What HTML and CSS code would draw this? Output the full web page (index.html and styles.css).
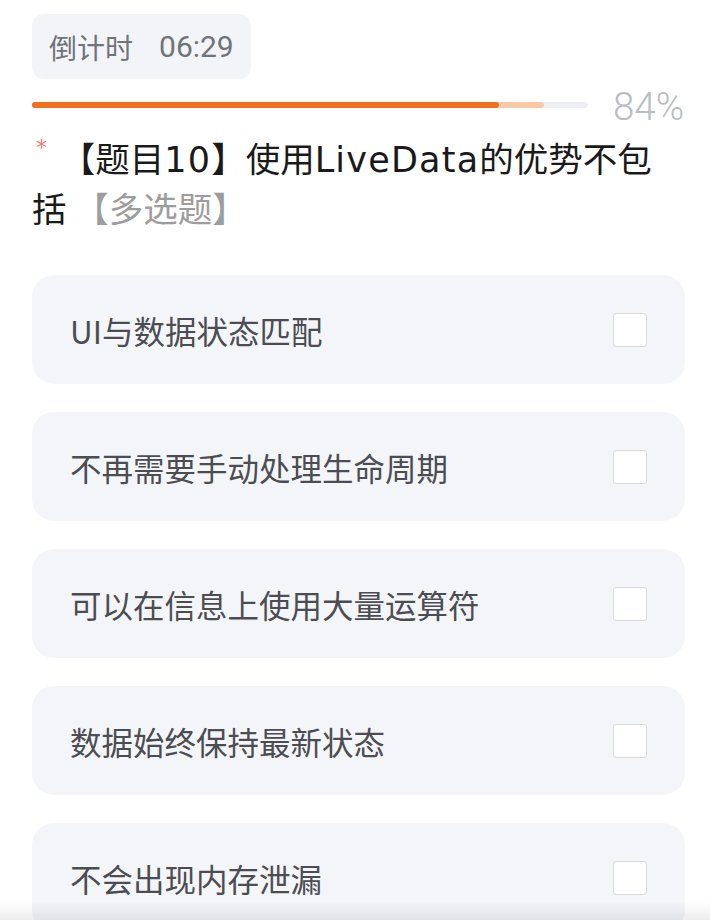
FILE: index.html
```html
<!DOCTYPE html>
<html lang="zh-CN">
<head>
<meta charset="utf-8">
<link rel="stylesheet" href="styles.css">
</head>
<body>
<div class="page">
  <div class="timer"><span class="timer-label">倒计时</span><span class="timer-value">06:29</span></div>
  <div class="progress-row">
    <div class="track">
      <div class="buffer" style="width:92%"></div>
      <div class="fill" style="width:84%"></div>
    </div>
    <div class="percent">84%</div>
  </div>
  <h1 class="question"><span class="star">*</span> 【题目<span class="latin">10</span>】使用<span class="latin">LiveData</span>的优势不包括 <span class="qtype">【多选题】</span></h1>
  <div class="options">
    <div class="option"><span class="opt-text">UI与数据状态匹配</span><span class="box"></span></div>
    <div class="option"><span class="opt-text">不再需要手动处理生命周期</span><span class="box"></span></div>
    <div class="option"><span class="opt-text">可以在信息上使用大量运算符</span><span class="box"></span></div>
    <div class="option"><span class="opt-text">数据始终保持最新状态</span><span class="box"></span></div>
    <div class="option"><span class="opt-text">不会出现内存泄漏</span><span class="box"></span></div>
  </div>
</div>
<div class="bottom-shade"></div>
</body>
</html>
```
FILE: styles.css
```css
html, body {
  margin: 0;
  padding: 0;
  background: #ffffff;
  overflow: hidden;
}
body {
  font-family: "Noto Sans CJK SC", "Noto Sans", sans-serif;
  width: 710px;
  height: 920px;
}
.page {
  padding: 14px 25px 0 32px;
}
.timer {
  display: inline-flex;
  align-items: center;
  box-sizing: border-box;
  width: 219px;
  height: 65px;
  padding-left: 17px;
  background: #f3f4f8;
  border-radius: 12px;
  color: #707378;
  font-size: 28px;
}
.timer-value {
  margin-left: 26px;
  font-family: Roboto, "Noto Sans", sans-serif;
  font-size: 30px;
}
.progress-row {
  display: flex;
  align-items: center;
  height: 40px;
  margin-top: 6px;
}
.track {
  position: relative;
  width: 556px;
  height: 6px;
  border-radius: 3px;
  background: #eceef3;
}
.buffer, .fill {
  position: absolute;
  left: 0;
  top: 0;
  bottom: 0;
  border-radius: 3px;
}
.buffer { background: #f9c9a6; }
.fill { background: #f0701e; }
.percent {
  margin-left: 25px;
  font-family: Roboto, sans-serif;
  font-weight: 300;
  font-size: 38.5px;
  color: #b9bcc1;
  line-height: 40px;
  margin-top: 4px;
}
.question {
  margin: 7px 0 0 0;
  padding-right: 20px;
  font-size: 34.5px;
  font-weight: 400;
  line-height: 50px;
  color: #1a1a1a;
}
.latin {
  font-family: "DejaVu Sans", sans-serif;
  font-size: 35px;
  line-height: 1;
  letter-spacing: 1.2px;
}
.star {
  color: #ef7a72;
  font-family: "DejaVu Sans", sans-serif;
  font-size: 22px;
  line-height: 1;
  vertical-align: top;
  position: relative;
  top: 5px;
  margin-left: 4px;
  margin-right: 6px;
}
.qtype {
  color: #9d9d9d;
}
.options {
  display: flex;
  flex-direction: column;
  gap: 28px;
  margin-top: 43px;
}
.option {
  display: flex;
  align-items: center;
  justify-content: space-between;
  height: 109px;
  padding: 0 38px;
  background: #f4f5f9;
  border-radius: 22px;
}
.opt-text {
  font-size: 31.5px;
  color: #4b4d52;
}
.box {
  width: 32px;
  height: 32px;
  background: #ffffff;
  border: 1px solid #d9dadd;
  border-radius: 3px;
}
.bottom-shade {
  position: fixed;
  left: 0;
  right: 0;
  bottom: 0;
  height: 18px;
  background: linear-gradient(to bottom, rgba(0,0,0,0), rgba(0,0,0,0.07));
}
```
